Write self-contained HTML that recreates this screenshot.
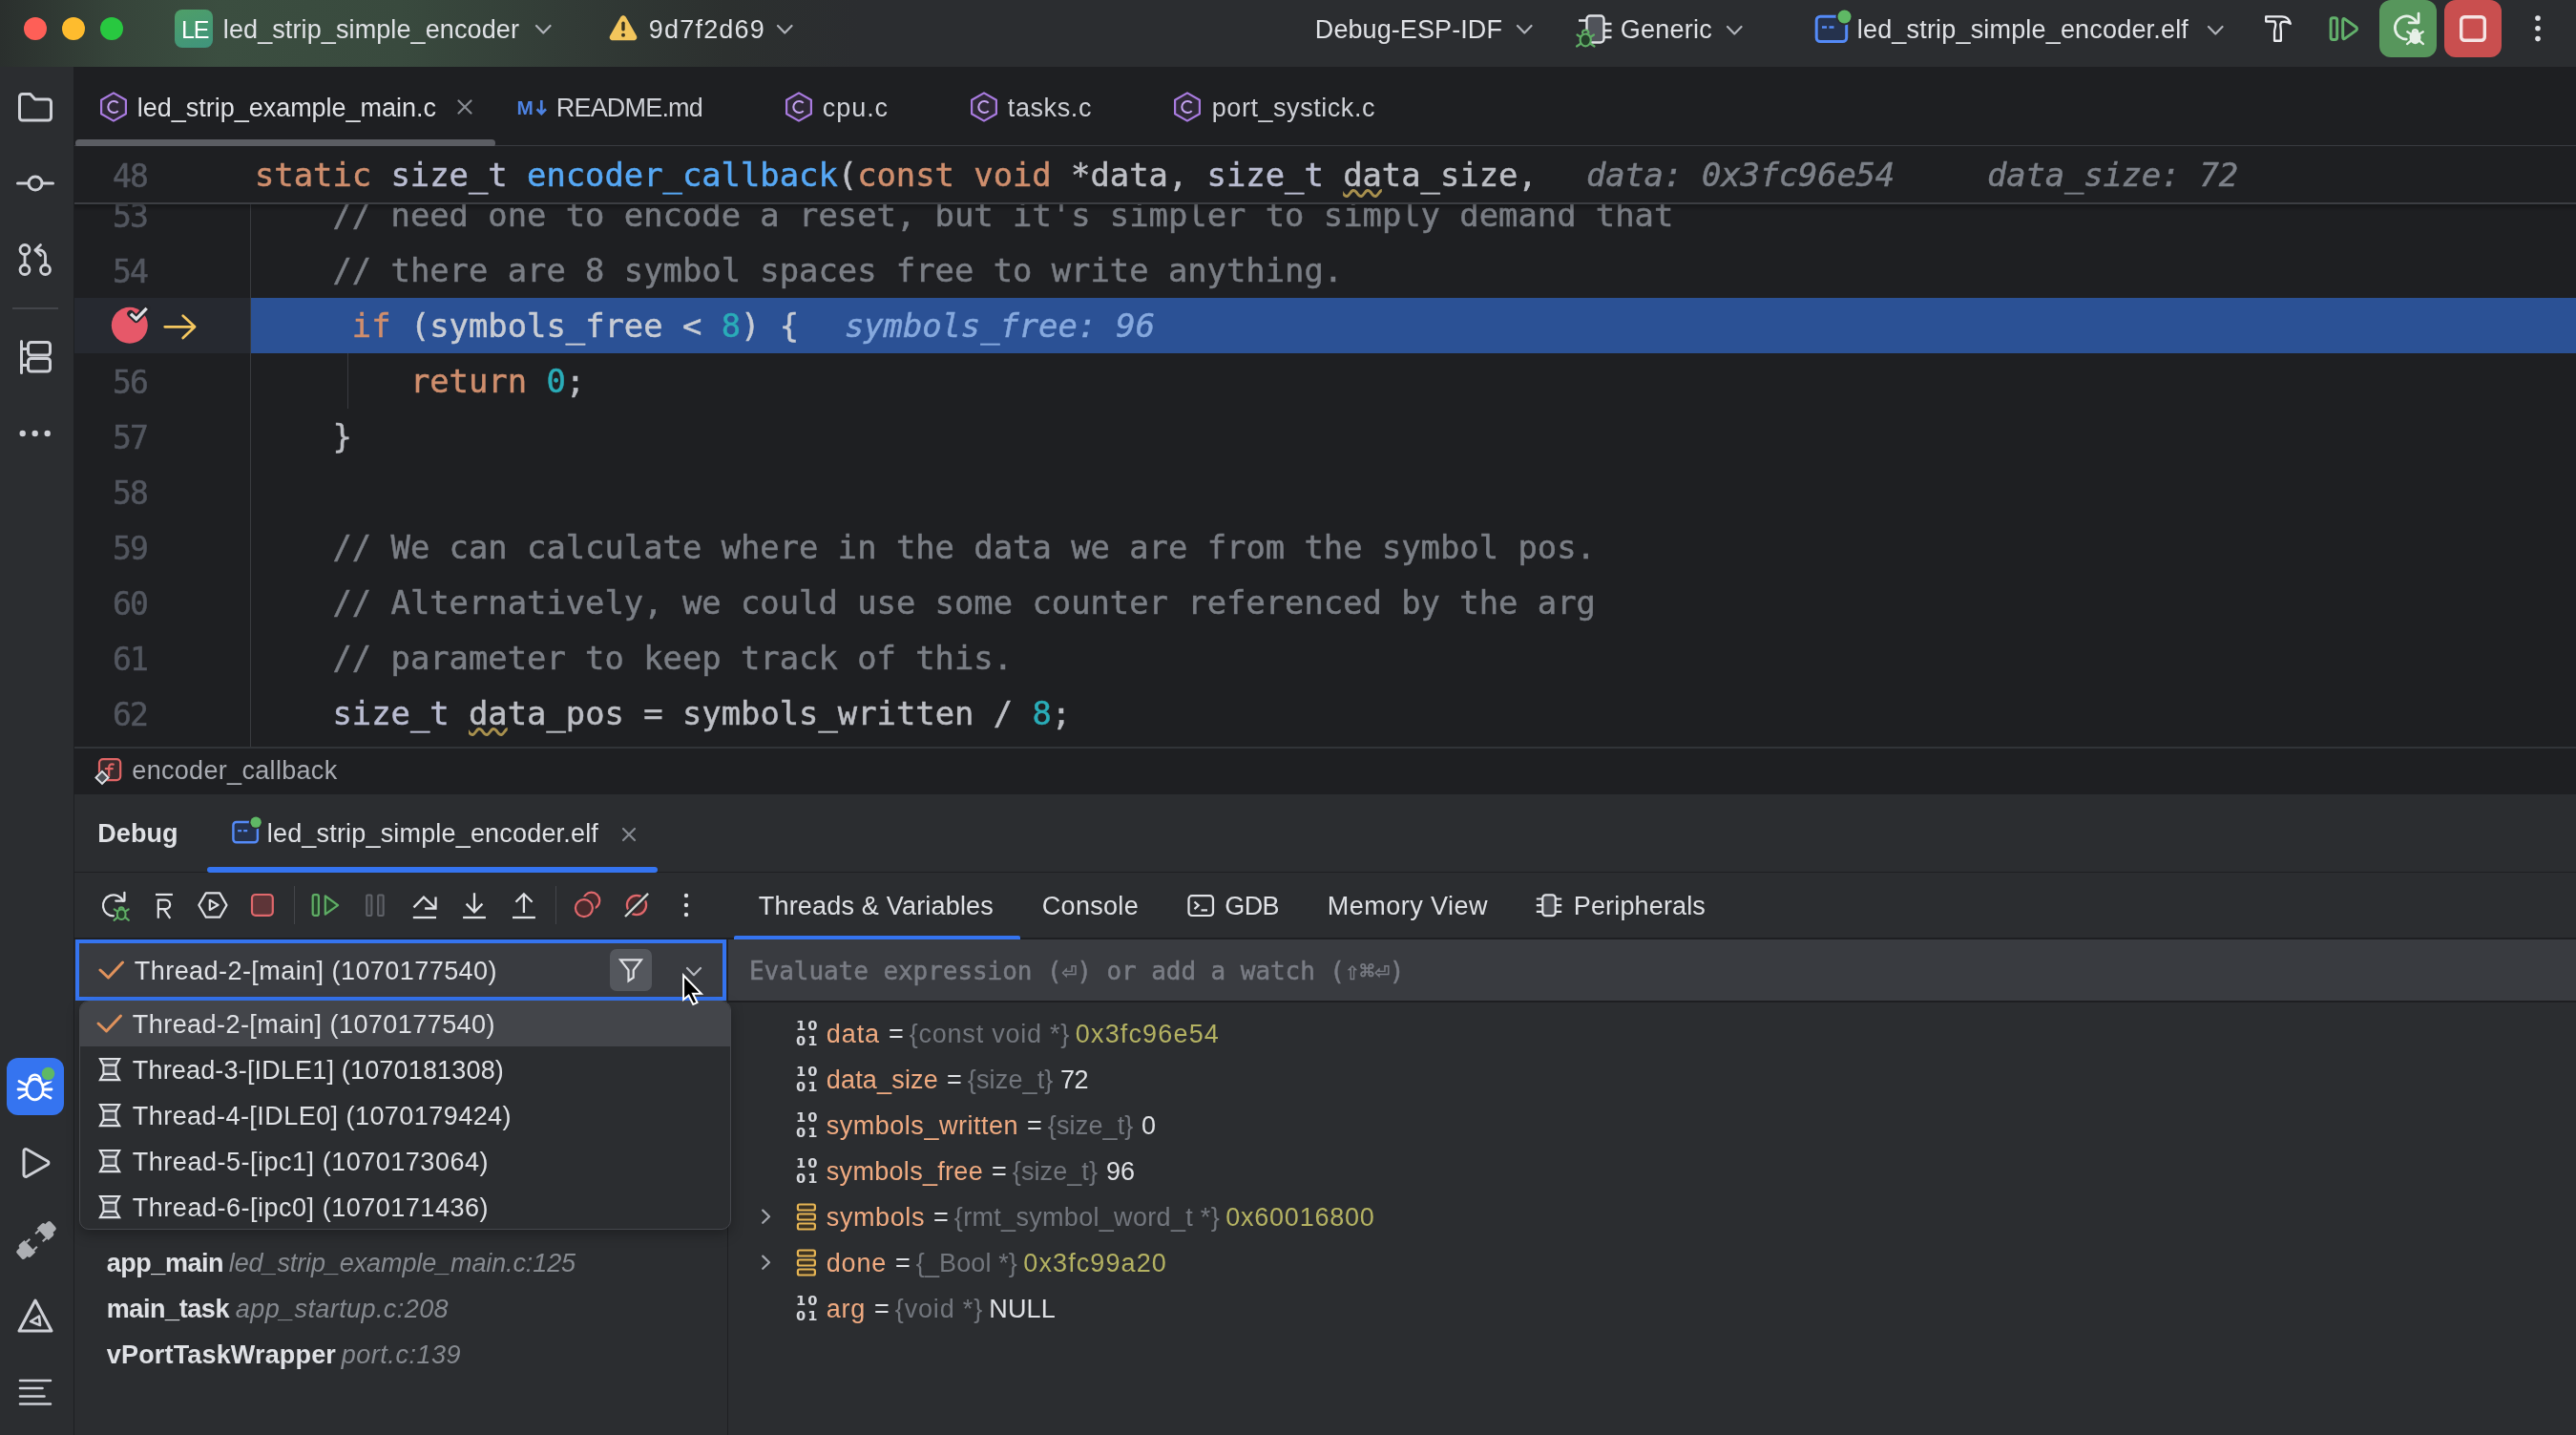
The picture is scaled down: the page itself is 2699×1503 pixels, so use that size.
<!DOCTYPE html>
<html lang="en"><head><meta charset="utf-8"><title>led_strip_simple_encoder</title><style>
html,body{margin:0;padding:0;background:#1e1f22;}
body{width:2699px;height:1503px;overflow:hidden;position:relative;font-family:"Liberation Sans",sans-serif;}
body>div,body>span,body>svg{position:absolute;}
.t{white-space:pre;will-change:opacity;}
.u{font-family:"Liberation Sans",sans-serif;}
.d{font-family:"DejaVu Sans","Liberation Sans",sans-serif;}
.m{font-family:"DejaVu Sans Mono","Liberation Mono",monospace;-webkit-text-stroke:0.5px;}
.sq{text-decoration:underline wavy #a8904e;text-decoration-thickness:2.5px;text-underline-offset:3px;}
body>span.t span{position:static;}
</style></head><body>
<div style="left:0px;top:0px;width:2699px;height:70px;background:linear-gradient(90deg,#2a2f2d 0px,#36443a 120px,#3b4e40 230px,#394a3e 420px,#323b36 600px,#2c302f 760px,#2b2d30 900px);"></div>
<div style="left:0px;top:70px;width:77px;height:1433px;background:#2b2d30;"></div>
<div style="left:78px;top:151.5px;width:2621px;height:1.5px;background:#393b40;"></div>
<div style="left:79px;top:146px;width:440px;height:8px;background:#5b5d63;border-radius:4px;"></div>
<div style="left:261.5px;top:214px;width:1.5px;height:568px;background:#393b40;"></div>
<div style="left:78px;top:312px;width:183.5px;height:58px;background:#262930;"></div>
<div style="left:263px;top:312px;width:2436px;height:58px;background:#2b5195;"></div>
<div style="left:364px;top:370px;width:1px;height:58px;background:#393b40;"></div>
<div style="left:78px;top:782px;width:2621px;height:2px;background:#313438;"></div>
<div style="left:78px;top:832px;width:2621px;height:671px;background:#2b2d30;"></div>
<div style="left:78px;top:912.5px;width:2621px;height:1.5px;background:#1e1f22;"></div>
<div style="left:217px;top:908px;width:472px;height:5.5px;background:#3574f0;border-radius:3px;"></div>
<div style="left:78px;top:982px;width:2621px;height:2px;background:#1e1f22;"></div>
<div style="left:769px;top:979.7px;width:300px;height:4.5px;background:#3574f0;border-radius:2px 2px 0 0;"></div>
<div style="left:763px;top:984px;width:1936px;height:64px;background:#393b40;"></div>
<div style="left:763px;top:1048px;width:1936px;height:1.5px;background:#1e1f22;"></div>
<div style="left:761.5px;top:984px;width:1.5px;height:519px;background:#1e1f22;"></div>
<div style="left:79px;top:984px;width:682px;height:64px;background:#393b40;box-sizing:border-box;border:4px solid #3574f0;"></div>
<div style="left:639px;top:994px;width:44px;height:44px;background:#54575d;border-radius:7px;"></div>
<div style="left:83px;top:1048px;width:682.5px;height:239.5px;background:#2b2d30;box-sizing:border-box;border:1px solid #45474c;border-radius:10px;box-shadow:0 5px 14px rgba(0,0,0,.28);overflow:hidden;"></div>
<div style="left:84px;top:1049px;width:680.5px;height:47px;background:#43454a;border-radius:9px 9px 0 0;"></div>
<div style="left:7px;top:1108px;width:60px;height:60px;background:#3574f0;border-radius:12px;"></div>
<div style="left:13px;top:322px;width:48px;height:2px;background:#43454a;"></div>
<div style="left:2493px;top:0px;width:60px;height:60px;background:#57965c;border-radius:12px;"></div>
<div style="left:2561px;top:0px;width:60px;height:60px;background:#c94f4f;border-radius:12px;"></div>
<div style="left:307.5px;top:928px;width:1.5px;height:40px;background:#43454a;"></div>
<div style="left:581.5px;top:928px;width:1.5px;height:40px;background:#43454a;"></div>
<div style="left:25px;top:18px;width:24px;height:24px;background:#fe5f57;border-radius:50%;"></div>
<div style="left:65px;top:18px;width:24px;height:24px;background:#febc2e;border-radius:50%;"></div>
<div style="left:105px;top:18px;width:24px;height:24px;background:#28c840;border-radius:50%;"></div>
<div style="left:183px;top:10px;width:40px;height:40px;background:linear-gradient(160deg,#4f9f68 0%,#3f947d 100%);border-radius:8px;"></div>
<span id="t1" class="t u" style="left:190px;top:11.34px;line-height:40px;font-size:25px;color:#ffffff;letter-spacing:-1.047px;">LE</span>
<span id="t2" class="t u" style="left:233.8px;top:10.64px;line-height:40px;font-size:27px;color:#dfe1e5;letter-spacing:0.105px;">led_strip_simple_encoder</span>
<span id="t3" class="t u" style="left:679.8px;top:10.64px;line-height:40px;font-size:27px;color:#dfe1e5;letter-spacing:1.198px;">9d7f2d69</span>
<span id="t4" class="t u" style="left:1377.8px;top:10.64px;line-height:40px;font-size:27px;color:#dfe1e5;letter-spacing:0.087px;">Debug-ESP-IDF</span>
<span id="t5" class="t u" style="left:1697.8px;top:10.64px;line-height:40px;font-size:27px;color:#dfe1e5;letter-spacing:0.237px;">Generic</span>
<span id="t6" class="t u" style="left:1945.8px;top:10.64px;line-height:40px;font-size:27px;color:#dfe1e5;letter-spacing:0.178px;">led_strip_simple_encoder.elf</span>
<svg style="left:559.75px;top:24.75px;" width="18.5" height="11.5" viewBox="0 0 18.5 11.5" fill="none"><path d="M2 2 L9.25 9.5 L16.5 2" stroke="#b0b3ba" stroke-width="2.2" stroke-linecap="round" stroke-linejoin="round"/></svg>
<svg style="left:812.75px;top:24.75px;" width="18.5" height="11.5" viewBox="0 0 18.5 11.5" fill="none"><path d="M2 2 L9.25 9.5 L16.5 2" stroke="#b0b3ba" stroke-width="2.2" stroke-linecap="round" stroke-linejoin="round"/></svg>
<svg style="left:1588.25px;top:24.75px;" width="18.5" height="11.5" viewBox="0 0 18.5 11.5" fill="none"><path d="M2 2 L9.25 9.5 L16.5 2" stroke="#b0b3ba" stroke-width="2.2" stroke-linecap="round" stroke-linejoin="round"/></svg>
<svg style="left:1807.75px;top:25.75px;" width="18.5" height="11.5" viewBox="0 0 18.5 11.5" fill="none"><path d="M2 2 L9.25 9.5 L16.5 2" stroke="#b0b3ba" stroke-width="2.2" stroke-linecap="round" stroke-linejoin="round"/></svg>
<svg style="left:2311.75px;top:25.75px;" width="18.5" height="11.5" viewBox="0 0 18.5 11.5" fill="none"><path d="M2 2 L9.25 9.5 L16.5 2" stroke="#b0b3ba" stroke-width="2.2" stroke-linecap="round" stroke-linejoin="round"/></svg>
<svg style="left:636px;top:13px;" width="34" height="32" viewBox="0 0 34 32" fill="none"><path d="M17 3.2c1.2 0 2.1.6 2.7 1.6l11.2 19.6c1.2 2.1-.3 4.8-2.7 4.8H5.800c-2.400 0-3.900-2.700-2.700-4.800L14.300 4.800c.6-1 1.500-1.600 2.700-1.600z" fill="#f2c55c"/><rect x="15.300" y="9.500" width="3.400" height="10" rx="1.700" fill="#3a3420"/><circle cx="17" cy="23.800" r="2" fill="#3a3420"/></svg>
<svg style="left:1648px;top:12px;" width="44" height="40" viewBox="0 0 44 40" fill="none"><rect x="14.500" y="4.500" width="18" height="28" rx="3.500" fill="#50535a" stroke="#dfe1e5" stroke-width="2.400"/>
<path d="M6 9.500h8.500M33 13h7.500M33 20h7.500M33 27h7.500" stroke="#dfe1e5" stroke-width="2.400"/>
<g stroke="#5fad65" stroke-width="2.200" stroke-linecap="round"><path d="M4.500 24.500l4 2.500M4 36.500l4.500-3M22 24.500l-4 2.500M22.500 36.500l-4.500-3" /><ellipse cx="13.200" cy="29.800" rx="5.600" ry="6.500" fill="#24402a"/><path d="M10 22.500c0-4 6.400-4 6.400 0" fill="#2b2d30"/></g></svg>
<svg style="left:1899px;top:9.5px;" width="42" height="38" viewBox="0 0 42 38" fill="none"><rect x="4.200" y="7.200" width="31.500" height="26.400" rx="4" fill="#25324d" stroke="#548af7" stroke-width="3"/>
<path d="M10 18.500h5M17.500 18.500h5" stroke="#548af7" stroke-width="2.600"/>
<circle cx="33.500" cy="7.500" r="9" fill="#2b2d30"/><circle cx="33.500" cy="7.500" r="7" fill="#5fb865"/></svg>
<svg style="left:2370px;top:13px;" width="34" height="34" viewBox="0 0 34 34" fill="none"><path d="M4.200 4.300H21C25.500 4.300 28.600 7.200 29.800 11.800C27 9.600 23.500 9.400 20.400 10.200L19.300 12.300C19.300 15.500 19.850 17.500 19.850 20V29.750H13.050V20C13.050 17.500 14.300 15.500 14.300 12.300L13.300 9.500H4.200z" stroke="#ebecf0" stroke-width="2.300" stroke-linejoin="round"/></svg>
<svg style="left:2439.5px;top:16px;" width="34" height="30" viewBox="0 0 34 30" fill="none"><rect x="2.100" y="2.800" width="6.600" height="22.700" rx="2.200" fill="none" stroke="#62b06b" stroke-width="3"/><path d="M14.700 5.500Q14.700 2.500 17.200 4.200L28.400 12.200Q30.600 14.150 28.400 16.100L17.200 24.100Q14.700 25.800 14.700 22.800z" fill="none" stroke="#62b06b" stroke-width="3" stroke-linejoin="round"/></svg>
<svg style="left:2504.5px;top:11.1px;" width="39.6" height="39.6" viewBox="0 0 36 36" fill="none"><path d="M24.900 11.700A11 11 0 1 0 15.500 27.400" stroke="#e6f0e7" stroke-width="2.5" stroke-linecap="round"/>
<path d="M17.300 11.600H26.400V2.800" stroke="#e6f0e7" stroke-width="2.5" stroke-linecap="round" stroke-linejoin="round"/>
<ellipse cx="23.200" cy="25.300" rx="7.600" ry="8.600" fill="#57965c"/><path d="M18.800 29.100l-3.300 2.800" stroke="#57965c" stroke-width="5.500" stroke-linecap="round"/>
<g stroke="#e6f0e7" stroke-width="2.100" stroke-linecap="round"><path d="M18.800 22.300l-3.100-2M27.600 22.300l3.100-2M18.800 29.100l-3.300 2.800M27.600 29.100l3.300 2.800"/><ellipse cx="23.200" cy="25.700" rx="4.400" ry="5.300" fill="#e6f0e7"/><path d="M20.800 20.700a2.400 2.400 0 0 1 4.800 0"/></g></svg>
<svg style="left:2575px;top:14px;" width="32" height="32" viewBox="0 0 32 32" fill="none"><rect x="3.700" y="3.700" width="24.600" height="24.600" rx="3.500" stroke="#f5e4e4" stroke-width="3.400"/></svg>
<svg style="left:2655px;top:15.2px;" width="8" height="29.6" viewBox="0 0 8 29.6" fill="none"><circle cx="4" cy="4" r="2.8" fill="#dfe1e5"/><circle cx="4" cy="14.8" r="2.8" fill="#dfe1e5"/><circle cx="4" cy="25.6" r="2.8" fill="#dfe1e5"/></svg>
<svg style="left:17px;top:95px;" width="40" height="34" viewBox="0 0 40 34" fill="none"><path d="M3.500 6.500a3 3 0 0 1 3-3h8.200l5 5.500h13.800a3 3 0 0 1 3 3v16a3 3 0 0 1-3 3h-27a3 3 0 0 1-3-3z" stroke="#ced0d6" stroke-width="3" stroke-linejoin="round"/></svg>
<svg style="left:15px;top:180px;" width="44" height="24" viewBox="0 0 44 24" fill="none"><path d="M3.500 12h11M29.500 12h11" stroke="#ced0d6" stroke-width="3" stroke-linecap="round"/><circle cx="22" cy="12" r="7" stroke="#ced0d6" stroke-width="3"/></svg>
<svg style="left:17px;top:253px;" width="40" height="38" viewBox="0 0 40 38" fill="none"><circle cx="9" cy="8.500" r="5" stroke="#ced0d6" stroke-width="2.800"/><circle cx="9" cy="29.500" r="5" stroke="#ced0d6" stroke-width="2.800"/><circle cx="30.500" cy="29.500" r="5" stroke="#ced0d6" stroke-width="2.800"/><path d="M9 13.500v11" stroke="#ced0d6" stroke-width="2.800"/><path d="M30.500 24.500V15a6 6 0 0 0-6-6h-4.500" stroke="#ced0d6" stroke-width="2.800" stroke-linecap="round"/><path d="M25.500 3.500L20 9l5.500 5.500" stroke="#ced0d6" stroke-width="2.800" stroke-linecap="round" stroke-linejoin="round"/></svg>
<svg style="left:18px;top:354px;" width="40" height="40" viewBox="0 0 40 40" fill="none"><path d="M4.500 3.500v33M4.500 11.500h6.500M4.500 28.500h6.500" stroke="#ced0d6" stroke-width="3" stroke-linecap="round"/><rect x="11.500" y="4.500" width="23" height="13.500" rx="3" stroke="#ced0d6" stroke-width="3"/><rect x="11.500" y="21.500" width="23" height="13.500" rx="3" stroke="#ced0d6" stroke-width="3"/></svg>
<svg style="left:18px;top:448px;" width="40" height="12" viewBox="0 0 40 12" fill="none"><circle cx="5.700" cy="6" r="3.200" fill="#ced0d6"/><circle cx="18.700" cy="6" r="3.200" fill="#ced0d6"/><circle cx="31.700" cy="6" r="3.200" fill="#ced0d6"/></svg>
<svg style="left:17px;top:1118px;overflow:visible;" width="40" height="40" viewBox="0 0 40 40" fill="none"><g stroke="#ffffff" stroke-width="2.800" stroke-linecap="round"><ellipse cx="19.500" cy="23" rx="8.800" ry="10.800"/><path d="M14 13.500c0-7.500 11-7.500 11 0" /><path d="M3 14.500l7.500 4M3 32l7.500-4M2 23h8.500M36 14.500l-7.500 4M36 32l-7.500-4M37 23h-8.500"/></g>
<circle cx="33.500" cy="6.500" r="8.600" fill="#3574f0"/><circle cx="33.500" cy="6.500" r="6.800" fill="#5fb865"/></svg>
<svg style="left:20px;top:1199px;" width="36" height="38" viewBox="0 0 36 38" fill="none"><path d="M5 6.500v25a2 2 0 0 0 3 1.700l22-12.500a2 2 0 0 0 0-3.400L8 4.800a2 2 0 0 0-3 1.700z" stroke="#ced0d6" stroke-width="3" stroke-linejoin="round"/></svg>
<svg style="left:15.7px;top:1276.7px;" width="44" height="44" viewBox="0 0 44 44" fill="none"><g transform="translate(22 22) rotate(-43)" fill="#adafb3"><path d="M9.150 -8.700H16Q18.200 -8.700 18.200 -6.500V-6H21.800Q24.200 -6 24.200 -3.600V3.600Q24.200 6 21.800 6H18.200V6.500Q18.200 8.700 16 8.700H9.150z"/><rect x="4" y="-6.600" width="5.300" height="2.100"/><rect x="4" y="4.500" width="5.300" height="2.100"/><g transform="scale(-1 1)"><path d="M9.150 -8.700H16Q18.200 -8.700 18.200 -6.500V-6H21.800Q24.200 -6 24.200 -3.600V3.600Q24.200 6 21.800 6H18.200V6.500Q18.200 8.700 16 8.700H9.150z"/><rect x="4" y="-6.600" width="5.300" height="2.100"/><rect x="4" y="4.500" width="5.300" height="2.100"/></g></g></svg>
<svg style="left:17px;top:1358px;" width="40" height="40" viewBox="0 0 40 40" fill="none"><path d="M20 4L37 36H3z" stroke="#ced0d6" stroke-width="3" stroke-linejoin="round"/><path d="M24 20.500l-9 5.500 10 4z" stroke="#ced0d6" stroke-width="2.600" stroke-linejoin="round"/></svg>
<svg style="left:19px;top:1442px;" width="36" height="32" viewBox="0 0 36 32" fill="none"><path d="M2 4h32M2 12h23.500M2 20.500h25.500M2 28.500h32" stroke="#ced0d6" stroke-width="2.600" stroke-linecap="round"/></svg>
<svg style="left:103px;top:95px;" width="32" height="34" viewBox="0 0 32 34" fill="none"><path d="M16 2.400l12.900 7.300v14.600l-12.900 7.300-12.900-7.300V9.700z" fill="#2e2836" stroke="#a97be0" stroke-width="2.200" stroke-linejoin="round"/><path d="M20.700 12.900a6 6 0 1 0 0 8.200" stroke="#c3a2ee" stroke-width="2.100" stroke-linecap="butt"/></svg>
<span id="t7" class="t u" style="left:143.8px;top:92.64px;line-height:40px;font-size:27px;color:#dfe1e5;letter-spacing:-0.019px;">led_strip_example_main.c</span>
<svg style="left:479px;top:104px;" width="16" height="16" viewBox="0 0 16 16" fill="none"><path d="M1.500 1.500l13 13M14.500 1.500l-13 13" stroke="#868a91" stroke-width="2.200" stroke-linecap="round"/></svg>
<span id="t8" class="t u" style="left:541.5px;top:92.79px;line-height:40px;font-size:20.8px;color:#4d82e2;font-weight:700;letter-spacing:0.672px;">M</span>
<svg style="left:559px;top:101px;" width="16" height="22" viewBox="0 0 16 22" fill="none"><path d="M8.300 4V18M3.600 13.200l4.700 4.800 4.700-4.800" stroke="#4d82e2" stroke-width="2.700" stroke-linecap="butt" stroke-linejoin="miter"/></svg>
<span id="t9" class="t u" style="left:582.8px;top:92.64px;line-height:40px;font-size:27px;color:#ced0d6;letter-spacing:-0.816px;">README.md</span>
<svg style="left:821px;top:95px;" width="32" height="34" viewBox="0 0 32 34" fill="none"><path d="M16 2.400l12.900 7.300v14.600l-12.900 7.300-12.900-7.300V9.700z" fill="#2e2836" stroke="#a97be0" stroke-width="2.200" stroke-linejoin="round"/><path d="M20.700 12.900a6 6 0 1 0 0 8.200" stroke="#c3a2ee" stroke-width="2.100" stroke-linecap="butt"/></svg>
<span id="t10" class="t u" style="left:861.8px;top:92.64px;line-height:40px;font-size:27px;color:#ced0d6;letter-spacing:0.932px;">cpu.c</span>
<svg style="left:1015px;top:95px;" width="32" height="34" viewBox="0 0 32 34" fill="none"><path d="M16 2.400l12.900 7.300v14.600l-12.900 7.300-12.900-7.300V9.700z" fill="#2e2836" stroke="#a97be0" stroke-width="2.200" stroke-linejoin="round"/><path d="M20.700 12.900a6 6 0 1 0 0 8.200" stroke="#c3a2ee" stroke-width="2.100" stroke-linecap="butt"/></svg>
<span id="t11" class="t u" style="left:1055.8px;top:92.64px;line-height:40px;font-size:27px;color:#ced0d6;letter-spacing:0.596px;">tasks.c</span>
<svg style="left:1228px;top:95px;" width="32" height="34" viewBox="0 0 32 34" fill="none"><path d="M16 2.400l12.900 7.300v14.600l-12.900 7.300-12.900-7.300V9.700z" fill="#2e2836" stroke="#a97be0" stroke-width="2.200" stroke-linejoin="round"/><path d="M20.700 12.900a6 6 0 1 0 0 8.200" stroke="#c3a2ee" stroke-width="2.100" stroke-linecap="butt"/></svg>
<span id="t12" class="t u" style="left:1269.8px;top:92.64px;line-height:40px;font-size:27px;color:#ced0d6;letter-spacing:0.547px;">port_systick.c</span>
<span id="t13" class="t m" style="left:118px;top:197.58px;line-height:58px;font-size:33px;color:#52565f;letter-spacing:-1.875px;">53</span>
<span id="t14" class="t m" style="left:348.44px;top:197.31px;line-height:58px;font-size:33.8px;color:#7a7e85;letter-spacing:0.013px;">// need one to encode a reset, but it's simpler to simply demand that</span>
<span id="t15" class="t m" style="left:118px;top:255.58px;line-height:58px;font-size:33px;color:#52565f;letter-spacing:-1.875px;">54</span>
<span id="t16" class="t m" style="left:348.44px;top:255.31px;line-height:58px;font-size:33.8px;color:#7a7e85;letter-spacing:0.012px;">// there are 8 symbol spaces free to write anything.</span>
<span id="t17" class="t m" style="left:368.8px;top:313.31px;line-height:58px;font-size:33.8px;color:#c8ccd4;letter-spacing:0.012px;"><span style="color:#cf8e6d">if</span> (symbols_free &lt; <span style="color:#2aacb8">8</span>) {</span>
<span id="t18" class="t m" style="left:885px;top:313.31px;line-height:58px;font-size:33.8px;color:#86a9de;font-style:italic;letter-spacing:-0.035px;">symbols_free: 96</span>
<span id="t19" class="t m" style="left:118px;top:371.58px;line-height:58px;font-size:33px;color:#52565f;letter-spacing:-1.875px;">56</span>
<span id="t20" class="t m" style="left:429.88px;top:371.31px;line-height:58px;font-size:33.8px;color:#bcbec4;letter-spacing:0.011px;"><span style="color:#cf8e6d">return</span> <span style="color:#2aacb8">0</span>;</span>
<span id="t21" class="t m" style="left:118px;top:429.58px;line-height:58px;font-size:33px;color:#52565f;letter-spacing:-1.875px;">57</span>
<span id="t22" class="t m" style="left:348.44px;top:429.31px;line-height:58px;font-size:33.8px;color:#bcbec4;letter-spacing:0.002px;">}</span>
<span id="t23" class="t m" style="left:118px;top:487.58px;line-height:58px;font-size:33px;color:#52565f;letter-spacing:-1.875px;">58</span>
<span id="t24" class="t m" style="left:118px;top:545.58px;line-height:58px;font-size:33px;color:#52565f;letter-spacing:-1.875px;">59</span>
<span id="t25" class="t m" style="left:348.44px;top:545.31px;line-height:58px;font-size:33.8px;color:#7a7e85;letter-spacing:0.013px;">// We can calculate where in the data we are from the symbol pos.</span>
<span id="t26" class="t m" style="left:118px;top:603.58px;line-height:58px;font-size:33px;color:#52565f;letter-spacing:-1.875px;">60</span>
<span id="t27" class="t m" style="left:348.44px;top:603.31px;line-height:58px;font-size:33.8px;color:#7a7e85;letter-spacing:0.013px;">// Alternatively, we could use some counter referenced by the arg</span>
<span id="t28" class="t m" style="left:118px;top:661.58px;line-height:58px;font-size:33px;color:#52565f;letter-spacing:-1.875px;">61</span>
<span id="t29" class="t m" style="left:348.44px;top:661.31px;line-height:58px;font-size:33.8px;color:#7a7e85;letter-spacing:0.012px;">// parameter to keep track of this.</span>
<span id="t30" class="t m" style="left:118px;top:719.58px;line-height:58px;font-size:33px;color:#52565f;letter-spacing:-1.875px;">62</span>
<span id="t31" class="t m" style="left:348.44px;top:719.31px;line-height:58px;font-size:33.8px;color:#bcbec4;letter-spacing:0.012px;"><span style="color:#b9bcd1">size_t</span> <span class="sq">da</span>ta_pos = symbols_written / <span style="color:#2aacb8">8</span>;</span>
<svg style="left:114px;top:320px;overflow:visible;" width="44" height="44" viewBox="0 0 44 44" fill="none"><circle cx="21.800" cy="20.800" r="19" fill="#e65869"/><path d="M23 8.700l5.800 5.500L39.700 2.900" stroke="#25272c" stroke-width="7.500" stroke-linecap="round" stroke-linejoin="round"/><path d="M23 8.700l5.800 5.500L39.700 2.900" stroke="#dfe1e5" stroke-width="3.400" stroke-linecap="butt" stroke-linejoin="miter"/></svg>
<svg style="left:170px;top:328px;" width="38" height="28" viewBox="0 0 38 28" fill="none"><path d="M2.700 14.300H33M21.700 2.700L34.100 14.300 21.700 26" stroke="#f5c75f" stroke-width="2.700" stroke-linecap="round" stroke-linejoin="round"/></svg>
<div style="left:78px;top:153px;width:2621px;height:59px;background:#1e1f22;"></div>
<div style="left:78px;top:212px;width:2621px;height:1.5px;background:#3c3e43;"></div>
<div style="left:78px;top:213.5px;width:2621px;height:7px;background:linear-gradient(180deg,rgba(0,0,0,.28),rgba(0,0,0,0));"></div>
<span id="t32" class="t m" style="left:118px;top:155.58px;line-height:58px;font-size:33px;color:#52565f;letter-spacing:-1.875px;">48</span>
<span id="t33" class="t m" style="left:267.0px;top:155.31px;line-height:58px;font-size:33.8px;color:#bcbec4;letter-spacing:0.011px;"><span style="color:#cf8e6d">static</span> <span style="color:#b9bcd1">size_t</span> <span style="color:#56a8f5">encoder_callback</span>(<span style="color:#cf8e6d">const void</span> *data, <span style="color:#b9bcd1">size_t</span> <span class="sq">da</span>ta_size,</span>
<span id="t34" class="t m" style="left:1662px;top:155.31px;line-height:58px;font-size:33.8px;color:#7c8088;font-style:italic;letter-spacing:-0.160px;">data: 0x3fc96e54</span>
<span id="t35" class="t m" style="left:2082px;top:155.31px;line-height:58px;font-size:33.8px;color:#7c8088;font-style:italic;letter-spacing:-0.117px;">data_size: 72</span>
<svg style="left:96px;top:790px;" width="36" height="34" viewBox="0 0 36 34" fill="none"><rect x="8" y="5.100" width="22.200" height="22" rx="4" fill="#3a2b2d" stroke="#e06565" stroke-width="2.200"/><path d="M22.800 10.600c-3-.700-4.600.6-4.600 3.200V23M14.800 15.200h7" stroke="#e06565" stroke-width="2.200" stroke-linecap="round"/><rect x="5.200" y="18.400" width="11.600" height="11.600" transform="rotate(45 11 24.200)" fill="#1e1f22"/><rect x="6.400" y="19.800" width="9.200" height="9.200" transform="rotate(45 11 24.400)" fill="#4e5157" stroke="#dfe1e5" stroke-width="2"/></svg>
<span id="t36" class="t u" style="left:138.3px;top:786.64px;line-height:40px;font-size:27px;color:#a8abb2;letter-spacing:0.316px;">encoder_callback</span>
<span id="t37" class="t u" style="left:102.3px;top:852.64px;line-height:40px;font-size:27px;color:#dfe1e5;font-weight:700;letter-spacing:0.038px;">Debug</span>
<svg style="left:240.66px;top:855.3px;" width="34" height="31" viewBox="0 0 42 38" fill="none"><rect x="4.200" y="7.200" width="31.500" height="26.400" rx="4" fill="#25324d" stroke="#548af7" stroke-width="3"/>
<path d="M10 18.500h5M17.500 18.500h5" stroke="#548af7" stroke-width="2.600"/>
<circle cx="33.500" cy="7.500" r="9" fill="#2b2d30"/><circle cx="33.500" cy="7.500" r="7" fill="#5fb865"/></svg>
<span id="t38" class="t u" style="left:279.8px;top:852.64px;line-height:40px;font-size:27px;color:#dfe1e5;letter-spacing:0.178px;">led_strip_simple_encoder.elf</span>
<svg style="left:651px;top:866px;" width="16" height="16" viewBox="0 0 16 16" fill="none"><path d="M2 2l12 12M14 2L2 14" stroke="#868a91" stroke-width="2.200" stroke-linecap="round"/></svg>
<svg style="left:104px;top:931.5px;" width="36.0" height="36.0" viewBox="0 0 36 36" fill="none"><path d="M24.900 11.700A11 11 0 1 0 15.500 27.400" stroke="#dfe1e5" stroke-width="2.3" stroke-linecap="round"/>
<path d="M17.300 11.600H26.400V2.800" stroke="#dfe1e5" stroke-width="2.3" stroke-linecap="round" stroke-linejoin="round"/>
<ellipse cx="23.200" cy="25.300" rx="7.600" ry="8.600" fill="#2b2d30"/><path d="M18.800 29.100l-3.300 2.800" stroke="#2b2d30" stroke-width="5.500" stroke-linecap="round"/>
<g stroke="#5fad65" stroke-width="2.100" stroke-linecap="round"><path d="M18.800 22.300l-3.100-2M27.600 22.300l3.100-2M18.800 29.100l-3.300 2.800M27.600 29.100l3.300 2.800"/><ellipse cx="23.200" cy="25.700" rx="4.400" ry="5.300" fill="#24402a"/><path d="M20.800 20.700a2.400 2.400 0 0 1 4.800 0"/></g></svg>
<svg style="left:160px;top:933px;" width="24" height="32" viewBox="0 0 24 32" fill="none"><path d="M3 3.950H20.900" stroke="#dfe1e5" stroke-width="2.200"/><path d="M5.800 28.800V9.700H13.400a4.750 4.750 0 0 1 0 9.500H5.800M11.600 19.200L18.300 28.800" stroke="#dfe1e5" stroke-width="2.200" stroke-linejoin="round"/></svg>
<svg style="left:206px;top:932px;" width="34" height="32" viewBox="0 0 34 32" fill="none"><path d="M9.800 3.400H24.200L31.500 16 24.200 28.700H9.800L2.300 16z" stroke="#dfe1e5" stroke-width="2.200" stroke-linejoin="round"/><path d="M13.800 10.800V21L22.600 15.900z" stroke="#dfe1e5" stroke-width="2.200" stroke-linejoin="round"/></svg>
<svg style="left:261px;top:934px;" width="28" height="28" viewBox="0 0 28 28" fill="none"><rect x="3" y="3" width="21.800" height="21.800" rx="3.800" fill="#5e3538" stroke="#e0686c" stroke-width="2.200"/></svg>
<svg style="left:325px;top:934px;" width="32" height="28" viewBox="0 0 32 28" fill="none"><rect x="2.700" y="3.200" width="6.200" height="21.700" rx="2" fill="#24402a" stroke="#5fad65" stroke-width="2.200"/><path d="M15.800 4.500v19.200l13.300-9.600z" fill="#24402a" stroke="#5fad65" stroke-width="2.200" stroke-linejoin="round"/></svg>
<svg style="left:381px;top:934px;" width="24" height="28" viewBox="0 0 24 28" fill="none"><rect x="3.200" y="3.400" width="5.200" height="21.500" rx="1" fill="#34363a" stroke="#5f6268" stroke-width="2"/><rect x="15.100" y="3.400" width="5.600" height="21.500" rx="1" fill="#34363a" stroke="#5f6268" stroke-width="2"/></svg>
<svg style="left:431px;top:932px;" width="28" height="32" viewBox="0 0 28 32" fill="none"><path d="M2.500 18.400L13 7.600 25.500 19.500M14.100 19.500H25.500V7.600" stroke="#dfe1e5" stroke-width="2.300" stroke-linejoin="miter"/><path d="M1.800 29H26" stroke="#dfe1e5" stroke-width="2.300"/></svg>
<svg style="left:483px;top:932px;" width="28" height="32" viewBox="0 0 28 32" fill="none"><path d="M14 3.200V23M5.600 14.600L14 23.300 22.400 14.600" stroke="#dfe1e5" stroke-width="2.300"/><path d="M2.100 29H25.900" stroke="#dfe1e5" stroke-width="2.300"/></svg>
<svg style="left:535px;top:932px;" width="28" height="32" viewBox="0 0 28 32" fill="none"><path d="M13.900 24V4.500M5.500 12.800L13.900 4.300 22.600 12.800" stroke="#dfe1e5" stroke-width="2.300"/><path d="M2 29H25.900" stroke="#dfe1e5" stroke-width="2.300"/></svg>
<svg style="left:599px;top:932px;" width="34" height="32" viewBox="0 0 34 32" fill="none"><circle cx="20.700" cy="11.300" r="8.600" fill="#4a2a2c" stroke="#e0686c" stroke-width="2.200"/><circle cx="12.900" cy="19.100" r="11.800" fill="#2b2d30"/><circle cx="12.900" cy="19.100" r="9" fill="#4a2a2c" stroke="#e0686c" stroke-width="2.200"/></svg>
<svg style="left:653px;top:932px;" width="28" height="32" viewBox="0 0 28 32" fill="none"><circle cx="14" cy="16" r="10.100" fill="#4a2a2c" stroke="#e0686c" stroke-width="2.200"/><path d="M2 28L26.100 3.900" stroke="#2b2d30" stroke-width="6.500"/><path d="M2 28L26.100 3.900" stroke="#d3d9d6" stroke-width="2.400"/></svg>
<svg style="left:715px;top:934px;" width="8" height="28" viewBox="0 0 8 28" fill="none"><circle cx="4" cy="4" r="2.2" fill="#dfe1e5"/><circle cx="4" cy="14" r="2.2" fill="#dfe1e5"/><circle cx="4" cy="24" r="2.2" fill="#dfe1e5"/></svg>
<span id="t39" class="t u" style="left:794.8px;top:928.64px;line-height:40px;font-size:27px;color:#dfe1e5;letter-spacing:0.188px;">Threads &amp; Variables</span>
<span id="t40" class="t u" style="left:1091.8px;top:928.64px;line-height:40px;font-size:27px;color:#dfe1e5;letter-spacing:0.304px;">Console</span>
<svg style="left:1243px;top:933px;" width="32" height="30" viewBox="0 0 32 30" fill="none"><rect x="2.500" y="5.200" width="25.500" height="20.800" rx="3.500" stroke="#dfe1e5" stroke-width="2.200"/><path d="M8.500 11.500l4.200 3.800-4.200 3.800M15.500 20.400h6.500" stroke="#dfe1e5" stroke-width="2.200" stroke-linecap="butt" stroke-linejoin="miter"/></svg>
<span id="t41" class="t u" style="left:1283.3px;top:928.64px;line-height:40px;font-size:27px;color:#dfe1e5;letter-spacing:-0.608px;">GDB</span>
<span id="t42" class="t u" style="left:1390.8px;top:928.64px;line-height:40px;font-size:27px;color:#dfe1e5;letter-spacing:0.468px;">Memory View</span>
<svg style="left:1607px;top:932px;" width="32" height="32" viewBox="0 0 32 32" fill="none"><rect x="9.300" y="5.300" width="13.400" height="21.800" rx="3.300" fill="#4a4c52" stroke="#dfe1e5" stroke-width="2.200"/><path d="M2.800 9.500h6.500M2.800 16.200h6.500M2.800 22.900h6.500M22.700 9.500h6.500M22.700 16.200h6.500M22.700 22.900h6.500" stroke="#dfe1e5" stroke-width="2.200"/></svg>
<span id="t43" class="t u" style="left:1648.8px;top:928.64px;line-height:40px;font-size:27px;color:#dfe1e5;letter-spacing:0.148px;">Peripherals</span>
<svg style="left:102px;top:1005px;" width="30" height="22" viewBox="0 0 30 22" fill="none"><path d="M3 11l8.500 8L26.500 3" stroke="#e0925c" stroke-width="3" stroke-linecap="round" stroke-linejoin="round"/></svg>
<span id="t44" class="t u" style="left:140.8px;top:996.64px;line-height:40px;font-size:27px;color:#dfe1e5;letter-spacing:0.445px;">Thread-2-[main] (1070177540)</span>
<svg style="left:646px;top:1001px;" width="30" height="30" viewBox="0 0 30 30" fill="none"><path d="M4.100 4.300H25.900L17.700 15.200V22.800L12.500 26.400V15.200z" stroke="#dfe1e5" stroke-width="2.200" stroke-linejoin="miter"/></svg>
<svg style="left:718.1px;top:1012.4px;" width="18" height="11.2" viewBox="0 0 18 11.2" fill="none"><path d="M2 2 L9.0 9.2 L16 2" stroke="#b4b7be" stroke-width="2.2" stroke-linecap="round" stroke-linejoin="round"/></svg>
<svg style="left:712px;top:1018px;" width="30" height="40" viewBox="0 0 30 40" fill="none"><path d="M4.100 3.500V29L9.500 24.600 14.300 34 18.500 32.100 14 22.800H22.800z" fill="#000000" stroke="#ffffff" stroke-width="2" stroke-linejoin="miter"/></svg>
<svg style="left:100px;top:1061px;" width="30" height="22" viewBox="0 0 30 22" fill="none"><path d="M3 11l8.500 8L26.500 3" stroke="#e0925c" stroke-width="3" stroke-linecap="round" stroke-linejoin="round"/></svg>
<span id="t45" class="t u" style="left:138.8px;top:1052.64px;line-height:40px;font-size:27px;color:#dfe1e5;letter-spacing:0.445px;">Thread-2-[main] (1070177540)</span>
<svg style="left:102px;top:1107px;" width="26" height="28" viewBox="0 0 26 28" fill="none"><path d="M2.900 2.050H23.200L19.500 8.600H6.400zM6.400 8.600V17.900H19.500V8.600M6.400 17.900H19.500L23.200 24.100H2.900z" fill="#4e5157" stroke="#dfe1e5" stroke-width="2.100" stroke-linejoin="miter"/></svg>
<span id="t46" class="t u" style="left:138.8px;top:1100.64px;line-height:40px;font-size:27px;color:#dfe1e5;letter-spacing:0.171px;">Thread-3-[IDLE1] (1070181308)</span>
<svg style="left:102px;top:1155px;" width="26" height="28" viewBox="0 0 26 28" fill="none"><path d="M2.900 2.050H23.200L19.500 8.600H6.400zM6.400 8.600V17.900H19.500V8.600M6.400 17.900H19.500L23.200 24.100H2.900z" fill="#4e5157" stroke="#dfe1e5" stroke-width="2.100" stroke-linejoin="miter"/></svg>
<span id="t47" class="t u" style="left:138.8px;top:1148.64px;line-height:40px;font-size:27px;color:#dfe1e5;letter-spacing:0.447px;">Thread-4-[IDLE0] (1070179424)</span>
<svg style="left:102px;top:1203px;" width="26" height="28" viewBox="0 0 26 28" fill="none"><path d="M2.900 2.050H23.200L19.500 8.600H6.400zM6.400 8.600V17.900H19.500V8.600M6.400 17.900H19.500L23.200 24.100H2.900z" fill="#4e5157" stroke="#dfe1e5" stroke-width="2.100" stroke-linejoin="miter"/></svg>
<span id="t48" class="t u" style="left:138.8px;top:1196.64px;line-height:40px;font-size:27px;color:#dfe1e5;letter-spacing:0.517px;">Thread-5-[ipc1] (1070173064)</span>
<svg style="left:102px;top:1251px;" width="26" height="28" viewBox="0 0 26 28" fill="none"><path d="M2.900 2.050H23.200L19.500 8.600H6.400zM6.400 8.600V17.900H19.500V8.600M6.400 17.900H19.500L23.200 24.100H2.900z" fill="#4e5157" stroke="#dfe1e5" stroke-width="2.100" stroke-linejoin="miter"/></svg>
<span id="t49" class="t u" style="left:138.8px;top:1244.64px;line-height:40px;font-size:27px;color:#dfe1e5;letter-spacing:0.517px;">Thread-6-[ipc0] (1070171436)</span>
<span id="t50" class="t u" style="left:111.8px;top:1302.64px;line-height:40px;font-size:27px;color:#dfe1e5;font-weight:700;letter-spacing:-0.480px;">app_main</span>
<span id="t51" class="t u" style="left:239.8px;top:1302.64px;line-height:40px;font-size:27px;color:#868a90;font-style:italic;letter-spacing:-0.108px;">led_strip_example_main.c:125</span>
<span id="t52" class="t u" style="left:111.8px;top:1350.64px;line-height:40px;font-size:27px;color:#dfe1e5;font-weight:700;letter-spacing:-0.430px;">main_task</span>
<span id="t53" class="t u" style="left:246.8px;top:1350.64px;line-height:40px;font-size:27px;color:#868a90;font-style:italic;letter-spacing:0.414px;">app_startup.c:208</span>
<span id="t54" class="t u" style="left:111.8px;top:1398.64px;line-height:40px;font-size:27px;color:#dfe1e5;font-weight:700;letter-spacing:0.163px;">vPortTaskWrapper</span>
<span id="t55" class="t u" style="left:357.8px;top:1398.64px;line-height:40px;font-size:27px;color:#868a90;font-style:italic;letter-spacing:0.511px;">port.c:139</span>
<span id="t56" class="t m" style="left:785px;top:997.00px;line-height:40px;font-size:26px;color:#797c84;letter-spacing:-0.054px;">Evaluate expression (⏎) or add a watch (⇧⌘⏎)</span>
<span id="t57" class="t d" style="left:834px;top:1065.91px;line-height:16px;font-size:14.7px;color:#d5d7dc;font-weight:700;letter-spacing:2.023px;">10</span>
<span id="t58" class="t d" style="left:834px;top:1081.91px;line-height:16px;font-size:14.7px;color:#d5d7dc;font-weight:700;letter-spacing:2.023px;">01</span>
<span id="t59" class="t u" style="left:865.8px;top:1062.64px;line-height:40px;font-size:27px;color:#efaa80;letter-spacing:0.911px;">data</span>
<span id="t60" class="t u" style="left:931px;top:1062.64px;line-height:40px;font-size:27px;color:#dfe1e5;letter-spacing:-2.281px;">=</span>
<span id="t61" class="t u" style="left:952.8px;top:1062.64px;line-height:40px;font-size:27px;color:#72767d;letter-spacing:0.756px;">{const void *}</span>
<span id="t62" class="t u" style="left:1126.8px;top:1062.64px;line-height:40px;font-size:27px;color:#b4b262;letter-spacing:1.158px;">0x3fc96e54</span>
<span id="t63" class="t d" style="left:834px;top:1113.91px;line-height:16px;font-size:14.7px;color:#d5d7dc;font-weight:700;letter-spacing:2.023px;">10</span>
<span id="t64" class="t d" style="left:834px;top:1129.91px;line-height:16px;font-size:14.7px;color:#d5d7dc;font-weight:700;letter-spacing:2.023px;">01</span>
<span id="t65" class="t u" style="left:865.8px;top:1110.64px;line-height:40px;font-size:27px;color:#efaa80;letter-spacing:0.179px;">data_size</span>
<span id="t66" class="t u" style="left:992px;top:1110.64px;line-height:40px;font-size:27px;color:#dfe1e5;letter-spacing:-2.281px;">=</span>
<span id="t67" class="t u" style="left:1013.8px;top:1110.64px;line-height:40px;font-size:27px;color:#72767d;letter-spacing:0.141px;">{size_t}</span>
<span id="t68" class="t u" style="left:1111px;top:1110.64px;line-height:40px;font-size:27px;color:#dfe1e5;letter-spacing:-0.523px;">72</span>
<span id="t69" class="t d" style="left:834px;top:1161.91px;line-height:16px;font-size:14.7px;color:#d5d7dc;font-weight:700;letter-spacing:2.023px;">10</span>
<span id="t70" class="t d" style="left:834px;top:1177.91px;line-height:16px;font-size:14.7px;color:#d5d7dc;font-weight:700;letter-spacing:2.023px;">01</span>
<span id="t71" class="t u" style="left:865.8px;top:1158.64px;line-height:40px;font-size:27px;color:#efaa80;letter-spacing:0.509px;">symbols_written</span>
<span id="t72" class="t u" style="left:1076px;top:1158.64px;line-height:40px;font-size:27px;color:#dfe1e5;letter-spacing:-2.281px;">=</span>
<span id="t73" class="t u" style="left:1097.8px;top:1158.64px;line-height:40px;font-size:27px;color:#72767d;letter-spacing:0.141px;">{size_t}</span>
<span id="t74" class="t u" style="left:1196px;top:1158.64px;line-height:40px;font-size:27px;color:#dfe1e5;letter-spacing:-1.031px;">0</span>
<span id="t75" class="t d" style="left:834px;top:1209.91px;line-height:16px;font-size:14.7px;color:#d5d7dc;font-weight:700;letter-spacing:2.023px;">10</span>
<span id="t76" class="t d" style="left:834px;top:1225.91px;line-height:16px;font-size:14.7px;color:#d5d7dc;font-weight:700;letter-spacing:2.023px;">01</span>
<span id="t77" class="t u" style="left:865.8px;top:1206.64px;line-height:40px;font-size:27px;color:#efaa80;letter-spacing:0.302px;">symbols_free</span>
<span id="t78" class="t u" style="left:1039px;top:1206.64px;line-height:40px;font-size:27px;color:#dfe1e5;letter-spacing:-2.281px;">=</span>
<span id="t79" class="t u" style="left:1060.8px;top:1206.64px;line-height:40px;font-size:27px;color:#72767d;letter-spacing:0.079px;">{size_t}</span>
<span id="t80" class="t u" style="left:1159px;top:1206.64px;line-height:40px;font-size:27px;color:#dfe1e5;letter-spacing:-0.023px;">96</span>
<svg style="left:832px;top:1258.6px;" width="28" height="32" viewBox="0 0 28 32" fill="none"><rect x="3.900" y="2.500" width="18" height="6" rx="1.800" fill="#3d3322" stroke="#e5b454" stroke-width="2.200"/><rect x="3.900" y="12.500" width="18" height="6" rx="1.800" fill="#3d3322" stroke="#e5b454" stroke-width="2.200"/><rect x="3.900" y="22.500" width="18" height="6" rx="1.800" fill="#3d3322" stroke="#e5b454" stroke-width="2.200"/></svg>
<svg style="left:794px;top:1265px;" width="16" height="24" viewBox="0 0 16 24" fill="none"><path d="M5.200 2.600L12 9.200 5.200 15.800" stroke="#a4a7ae" stroke-width="2.200" stroke-linecap="round" stroke-linejoin="round"/></svg>
<span id="t81" class="t u" style="left:865.8px;top:1254.64px;line-height:40px;font-size:27px;color:#efaa80;letter-spacing:0.596px;">symbols</span>
<span id="t82" class="t u" style="left:978px;top:1254.64px;line-height:40px;font-size:27px;color:#dfe1e5;letter-spacing:-2.281px;">=</span>
<span id="t83" class="t u" style="left:999.8px;top:1254.64px;line-height:40px;font-size:27px;color:#72767d;letter-spacing:0.313px;">{rmt_symbol_word_t *}</span>
<span id="t84" class="t u" style="left:1284.3px;top:1254.64px;line-height:40px;font-size:27px;color:#b4b262;letter-spacing:0.755px;">0x60016800</span>
<svg style="left:832px;top:1306.6px;" width="28" height="32" viewBox="0 0 28 32" fill="none"><rect x="3.900" y="2.500" width="18" height="6" rx="1.800" fill="#3d3322" stroke="#e5b454" stroke-width="2.200"/><rect x="3.900" y="12.500" width="18" height="6" rx="1.800" fill="#3d3322" stroke="#e5b454" stroke-width="2.200"/><rect x="3.900" y="22.500" width="18" height="6" rx="1.800" fill="#3d3322" stroke="#e5b454" stroke-width="2.200"/></svg>
<svg style="left:794px;top:1313px;" width="16" height="24" viewBox="0 0 16 24" fill="none"><path d="M5.200 2.600L12 9.200 5.200 15.800" stroke="#a4a7ae" stroke-width="2.200" stroke-linecap="round" stroke-linejoin="round"/></svg>
<span id="t85" class="t u" style="left:865.8px;top:1302.64px;line-height:40px;font-size:27px;color:#efaa80;letter-spacing:0.782px;">done</span>
<span id="t86" class="t u" style="left:938px;top:1302.64px;line-height:40px;font-size:27px;color:#dfe1e5;letter-spacing:-2.281px;">=</span>
<span id="t87" class="t u" style="left:959.8px;top:1302.64px;line-height:40px;font-size:27px;color:#72767d;letter-spacing:0.122px;">{_Bool *}</span>
<span id="t88" class="t u" style="left:1072.3px;top:1302.64px;line-height:40px;font-size:27px;color:#b4b262;letter-spacing:1.108px;">0x3fc99a20</span>
<span id="t89" class="t d" style="left:834px;top:1353.91px;line-height:16px;font-size:14.7px;color:#d5d7dc;font-weight:700;letter-spacing:2.023px;">10</span>
<span id="t90" class="t d" style="left:834px;top:1369.91px;line-height:16px;font-size:14.7px;color:#d5d7dc;font-weight:700;letter-spacing:2.023px;">01</span>
<span id="t91" class="t u" style="left:865.8px;top:1350.64px;line-height:40px;font-size:27px;color:#efaa80;letter-spacing:0.725px;">arg</span>
<span id="t92" class="t u" style="left:916px;top:1350.64px;line-height:40px;font-size:27px;color:#dfe1e5;letter-spacing:-2.281px;">=</span>
<span id="t93" class="t u" style="left:937.8px;top:1350.64px;line-height:40px;font-size:27px;color:#72767d;letter-spacing:0.827px;">{void *}</span>
<span id="t94" class="t u" style="left:1036.3px;top:1350.64px;line-height:40px;font-size:27px;color:#dfe1e5;letter-spacing:0.165px;">NULL</span>
</body></html>
